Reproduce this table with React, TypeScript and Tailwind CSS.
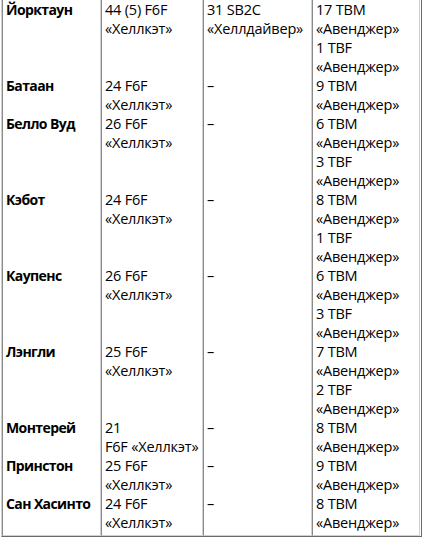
import React from "react";

type Row = {
  ship: string;
  fighters: string[];
  bombers: string[];
  torpedo: string[];
};

// Авиагруппы лёгких и тяжёлых авианосцев
const rows: Row[] = [
  { ship: "Йорктаун", fighters: ["44 (5) F6F", "«Хеллкэт»"], bombers: ["31 SB2C", "«Хеллдайвер»"], torpedo: ["17 TBM", "«Авенджер»", "1 TBF", "«Авенджер»"] },
  { ship: "Батаан", fighters: ["24 F6F", "«Хеллкэт»"], bombers: ["–"], torpedo: ["9 TBM", "«Авенджер»"] },
  { ship: "Белло Вуд", fighters: ["26 F6F", "«Хеллкэт»"], bombers: ["–"], torpedo: ["6 TBM", "«Авенджер»", "3 TBF", "«Авенджер»"] },
  { ship: "Кэбот", fighters: ["24 F6F", "«Хеллкэт»"], bombers: ["–"], torpedo: ["8 TBM", "«Авенджер»", "1 TBF", "«Авенджер»"] },
  { ship: "Каупенс", fighters: ["26 F6F", "«Хеллкэт»"], bombers: ["–"], torpedo: ["6 TBM", "«Авенджер»", "3 TBF", "«Авенджер»"] },
  { ship: "Лэнгли", fighters: ["25 F6F", "«Хеллкэт»"], bombers: ["–"], torpedo: ["7 TBM", "«Авенджер»", "2 TBF", "«Авенджер»"] },
  { ship: "Монтерей", fighters: ["21", "F6F «Хеллкэт»"], bombers: ["–"], torpedo: ["8 TBM", "«Авенджер»"] },
  { ship: "Принстон", fighters: ["25 F6F", "«Хеллкэт»"], bombers: ["–"], torpedo: ["9 TBM", "«Авенджер»"] },
  { ship: "Сан Хасинто", fighters: ["24 F6F", "«Хеллкэт»"], bombers: ["–"], torpedo: ["8 TBM", "«Авенджер»"] },
];

const Cell: React.FC<{ lines: string[]; bold?: boolean; last?: boolean }> = ({ lines, bold, last }) => (
  <div
    className={`border-l border-r border-l-[#8a8a8a] border-r-[#d0d0d0] pl-[3px] ${
      last ? "border-b border-b-[#d0d0d0] pb-[3px]" : ""
    } ${bold ? "font-bold text-[14px] tracking-[-0.6px]" : "tracking-[-0.2px]"}`}
  >
    {lines.map((l, i) => (
      <div key={i} className="whitespace-nowrap">
        {l}
      </div>
    ))}
  </div>
);

export default function App() {
  return (
    <div className="bg-white w-[423px] h-[540px] overflow-hidden">
      <div
        className="ml-[1px] w-[421px] border-l border-r border-b border-l-[#d0d0d0] border-r-[#6a6a6a] border-b-[#6a6a6a] text-[14.5px] leading-[19px] text-black"
        style={{ fontFamily: '"Open Sans", "Noto Sans", sans-serif' }}
      >
        <div className="grid grid-cols-[99px_102px_109px_108px]">
          {rows.map((r, i) => {
            const last = i === rows.length - 1;
            return (
              <React.Fragment key={r.ship}>
                <Cell lines={[r.ship]} bold last={last} />
                <Cell lines={r.fighters} last={last} />
                <Cell lines={r.bombers} last={last} />
                <Cell lines={r.torpedo} last={last} />
              </React.Fragment>
            );
          })}
        </div>
      </div>
    </div>
  );
}
